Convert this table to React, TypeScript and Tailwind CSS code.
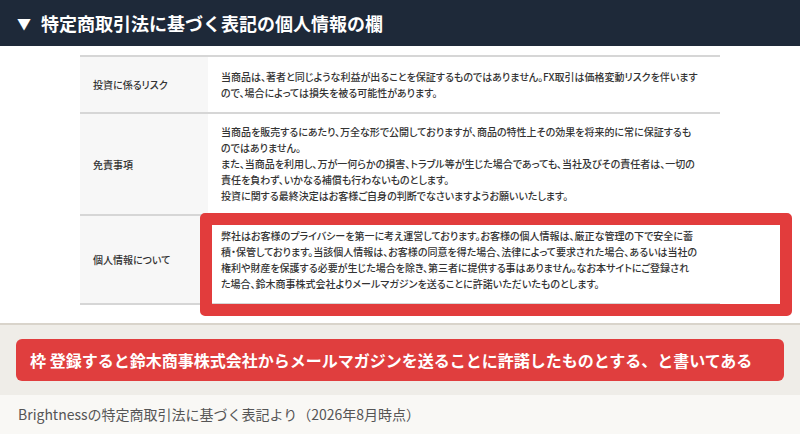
import React from "react";

const rows: { label: string; lines: string[]; h: string }[] = [
  {
    label: "投資に係るリスク",
    h: "h-[57px]",
    lines: [
      "当商品は、著者と同じような利益が出ることを保証するものではありません。FX取引は価格変動リスクを伴います",
      "ので、場合によっては損失を被る可能性があります。",
    ],
  },
  {
    label: "免責事項",
    h: "h-[102px]",
    lines: [
      "当商品を販売するにあたり、万全な形で公開しておりますが、商品の特性上その効果を将来的に常に保証するも",
      "のではありません。",
      "また、当商品を利用し、万が一何らかの損害、トラブル等が生じた場合であっても、当社及びその責任者は、一切の",
      "責任を負わず、いかなる補償も行わないものとします。",
      "投資に関する最終決定はお客様ご自身の判断でなさいますようお願いいたします。",
    ],
  },
  {
    label: "個人情報について",
    h: "h-[89px]",
    lines: [
      "弊社はお客様のプライバシーを第一に考え運営しております。お客様の個人情報は、厳正な管理の下で安全に蓄",
      "積・保管しております。当該個人情報は、お客様の同意を得た場合、法律によって要求された場合、あるいは当社の",
      "権利や財産を保護する必要が生じた場合を除き、第三者に提供する事はありません。なお本サイトにご登録され",
      "た場合、鈴木商事株式会社よりメールマガジンを送ることに許諾いただいたものとします。",
    ],
  },
];

export default function App() {
  return (
    <div className="w-[800px] h-[434px] overflow-hidden flex flex-col bg-white font-['Noto_Sans_CJK_JP','Noto_Sans',sans-serif]">
      <div className="h-[46px] shrink-0 bg-[#1e2939] flex items-center pl-[17px] text-white text-[18px] font-bold leading-none">
        <span className="text-[14px] mr-[10px]">▼</span>
        <span>特定商取引法に基づく表記の個人情報の欄</span>
      </div>

      <div className="relative h-[277px] shrink-0 bg-white pt-[9px] pl-[80px]">
        <div className="w-[640px] border-b-2 border-[#d6d6d6]">
          {rows.map((r) => (
            <div key={r.label} className={`flex border-t-2 border-[#d6d6d6] ${r.h}`}>
              <div className="w-[128px] shrink-0 bg-[#f7f7f7] flex items-center pl-[13px] text-[10px] font-medium text-[#333] [font-feature-settings:'palt']">
                {r.label}
              </div>
              <div className="flex-1 flex flex-col justify-center pl-[13px] text-[10px] font-medium leading-[16px] text-[#333] whitespace-nowrap [font-feature-settings:'palt']">
                {r.lines.map((l, i) => (
                  <div key={i}>{l}</div>
                ))}
              </div>
            </div>
          ))}
        </div>
        <div className="absolute left-[200px] top-[167px] w-[592px] h-[103px] border-[12px] border-[#e23c3c] rounded-[5px]" />
      </div>

      <div className="h-[72px] shrink-0 border-t-2 border-[#d9d4cb] bg-[#efede8] px-[16px] pt-[14px]">
        <div className="h-[42px] rounded-[6px] bg-[#e03e3e] flex items-center pl-[14px] text-white text-[16px] font-bold whitespace-nowrap">
          枠 登録すると鈴木商事株式会社からメールマガジンを送ることに許諾したものとする、と書いてある
        </div>
      </div>

      <div className="flex-1 bg-[#f9f8f5] flex items-center pl-[18px] pb-[1px] text-[14px] text-[#555] whitespace-nowrap">
        Brightnessの特定商取引法に基づく表記より（2026年8月時点）
      </div>
    </div>
  );
}
